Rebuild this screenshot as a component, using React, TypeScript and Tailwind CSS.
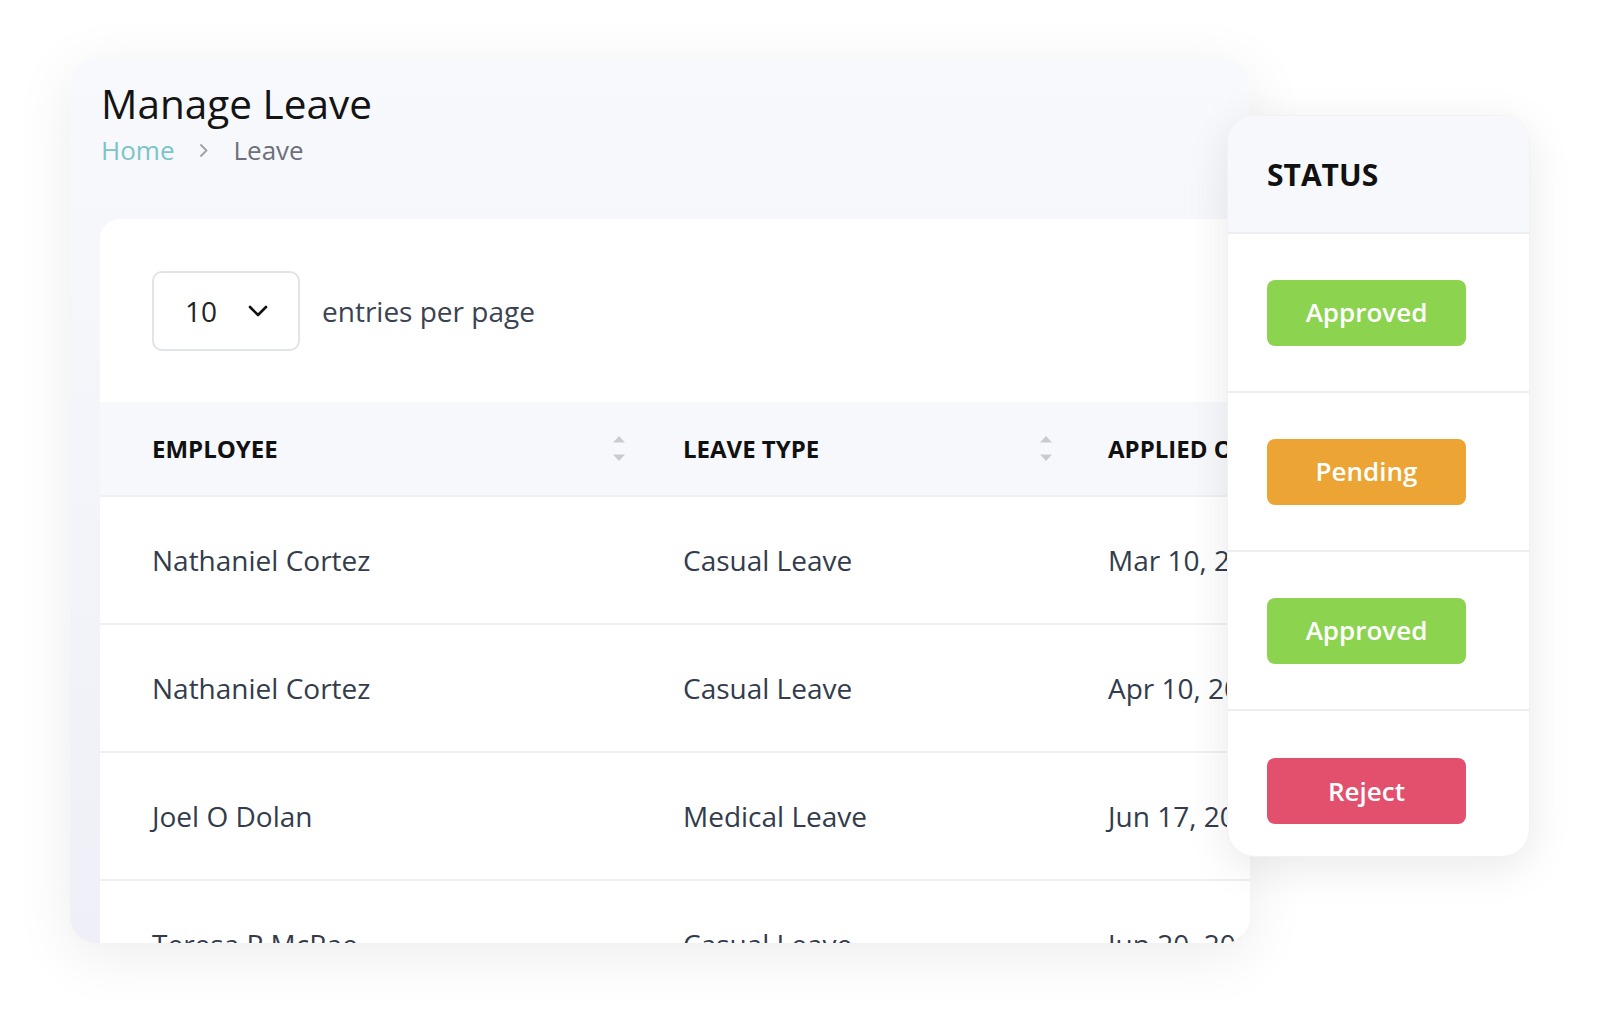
import React from "react";

const rows: [string, string, string][] = [
  ["Nathaniel Cortez", "Casual Leave", "Mar 10, 2019"],
  ["Nathaniel Cortez", "Casual Leave", "Apr 10, 2019"],
  ["Joel O Dolan", "Medical Leave", "Jun 17, 2019"],
  ["Teresa P McRae", "Casual Leave", "Jun 20, 2019"],
];

function SortIcon() {
  return (
    <svg width="12" height="25" viewBox="0 0 12 25" className="shrink-0">
      <path d="M6 0 L12 6.5 H0 Z" fill="#c8cbd0" />
      <path d="M6 25 L12 18.5 H0 Z" fill="#c8cbd0" />
    </svg>
  );
}

function StatusButton({ label, color }: { label: string; color: string }) {
  return (
    <div
      className={`flex h-[66px] w-[199px] items-center justify-center rounded-[8px] text-[26px] font-semibold text-white ${color}`}
    >
      {label}
    </div>
  );
}

export default function App() {
  return (
    <div className="relative h-[1024px] w-[1600px] overflow-hidden bg-white font-['Open_Sans',sans-serif]">
      {/* Main card */}
      <div className="ml-[70px] mt-[58px] h-[885px] w-[1180px] overflow-hidden rounded-[26px] bg-gradient-to-b from-[#f8f9fc] to-[#eff0f7] pt-[22px] shadow-[0_12px_60px_rgba(0,0,0,0.08)]">
        <div className="pl-[31px]">
          <h1 className="text-[40.5px] leading-[48px] font-normal text-[#141414]">Manage Leave</h1>
          <div className="mt-[6px] flex items-center text-[26px] leading-[32px]">
            <span className="text-[#7cc4c9]">Home</span>
            <svg width="9" height="15" viewBox="0 0 9 15" className="ml-[25px] mr-[25px]">
              <path d="M1.5 1.5 L7.5 7.5 L1.5 13.5" fill="none" stroke="#9aa0a9" strokeWidth="1.8" />
            </svg>
            <span className="text-[#6b7079]">Leave</span>
          </div>
        </div>

        {/* Table card */}
        <div className="ml-[30px] mt-[53px] h-[800px] w-[1200px] rounded-tl-[20px] bg-white pt-[52px]">
          <div className="flex items-center pl-[52px]">
            <div className="flex h-[80px] w-[148px] items-center rounded-[10px] border-2 border-[#e1e4ea] pl-[31px]">
              <span className="text-[28px] text-[#222]">10</span>
              <svg width="20" height="12" viewBox="0 0 20 12" className="ml-[31px]">
                <path d="M2 2 L10 10 L18 2" fill="none" stroke="#111" strokeWidth="2.6" strokeLinecap="round" strokeLinejoin="round" />
              </svg>
            </div>
            <span className="ml-[22px] text-[28px] text-[#3b4352]">entries per page</span>
          </div>

          <div className="mt-[51px]">
            <div className="grid h-[93px] grid-cols-[531px_425px_1fr] items-center bg-[#f7f8fc] text-[24px] font-bold text-[#111]">
              <div className="flex items-center justify-between pl-[52px] pr-[6px]">
                <span>EMPLOYEE</span>
                <SortIcon />
              </div>
              <div className="flex items-center justify-between pl-[52px] pr-[4px]">
                <span>LEAVE TYPE</span>
                <SortIcon />
              </div>
              <div className="pl-[52px] whitespace-nowrap">APPLIED ON</div>
            </div>
            {rows.map((r, i) => (
              <div
                key={i}
                className="grid h-[128px] grid-cols-[531px_425px_1fr] items-center border-t-2 border-[#eff0f4] text-[28px] text-[#333c4c]"
              >
                <div className="pl-[52px]">{r[0]}</div>
                <div className="pl-[52px]">{r[1]}</div>
                <div className="pl-[52px] whitespace-nowrap">{r[2]}</div>
              </div>
            ))}
          </div>
        </div>
      </div>

      {/* Status panel overlay */}
      <div className="absolute left-[1227px] top-[115px] w-[303px] overflow-hidden rounded-[28px] border border-[#f1f2f6] bg-white shadow-[0_10px_45px_rgba(0,0,0,0.09)]">
        <div className="flex h-[118px] items-center border-b-2 border-[#eceef2] bg-[#f7f8fc] pl-[39px]">
          <span className="text-[30px] font-bold text-[#111]">STATUS</span>
        </div>
        <div className="flex h-[159px] items-center border-b-2 border-[#eceef2] pl-[39px]">
          <StatusButton label="Approved" color="bg-[#8cd450]" />
        </div>
        <div className="flex h-[159px] items-center border-b-2 border-[#eceef2] pl-[39px]">
          <StatusButton label="Pending" color="bg-[#eca535]" />
        </div>
        <div className="flex h-[159px] items-center border-b-2 border-[#eceef2] pl-[39px]">
          <StatusButton label="Approved" color="bg-[#8cd450]" />
        </div>
        <div className="h-[145px] pl-[39px] pt-[47px]">
          <StatusButton label="Reject" color="bg-[#e3506d]" />
        </div>
      </div>
    </div>
  );
}
